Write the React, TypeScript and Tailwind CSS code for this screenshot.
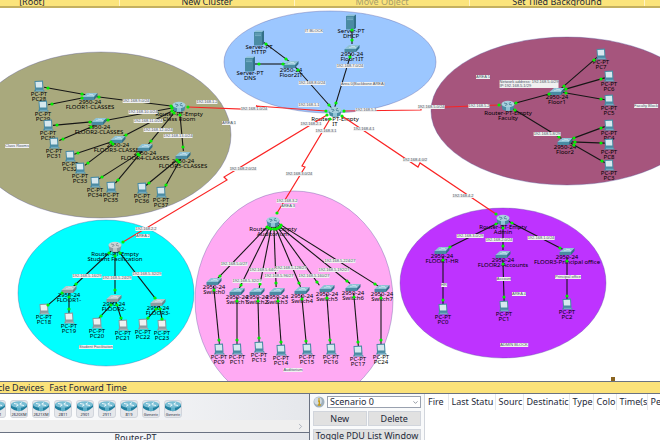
import React from "react";
import { ChevronDown, ChevronRight } from "lucide-react";

type Kind = "pc" | "switch" | "router" | "server";

interface Device {
  kind: Kind;
  x: number;
  y: number;
  label: string[];
  pale?: boolean;
}

interface Tag {
  x: number;
  y: number;
  text: string[];
}

// Scroll position of the workspace inside the logical view
const SCROLL_Y = 8;

const zones = [
  { cx: 101, cy: 135, rx: 130, ry: 83, fill: "#a9a97d" },
  { cx: 330, cy: 62, rx: 106, ry: 51, fill: "#9cc7ff" },
  { cx: 567, cy: 111, rx: 136, ry: 74, fill: "#a6557d" },
  { cx: 106, cy: 293, rx: 88, ry: 73, fill: "#00ffff" },
  { cx: 294, cy: 300, rx: 99, ry: 109, fill: "#ffaaf3" },
  { cx: 503, cy: 283, rx: 103, ry: 75, fill: "#be33ff" },
];

const pc = (x: number, y: number, name: string, pale = false): Device => ({
  kind: "pc",
  x,
  y,
  label: ["PC-PT", name],
  pale,
});

const sw = (x: number, y: number, name: string, pale = false): Device => ({
  kind: "switch",
  x,
  y,
  label: ["2950-24", name],
  pale,
});

const router = (x: number, y: number, name: string, pale = false): Device => ({
  kind: "router",
  x,
  y,
  label: ["Router-PT-Empty", name],
  pale,
});

const server = (x: number, y: number, name: string): Device => ({
  kind: "server",
  x,
  y,
  label: ["Server-PT", name],
});

const devices: Device[] = [
  // Class rooms
  pc(39, 86, "PC28"),
  pc(43, 106, "PC29"),
  pc(48, 125, "PC30"),
  pc(54, 143, "PC31"),
  pc(70, 156, "PC32"),
  pc(80, 168, "PC33"),
  pc(95, 182, "PC34"),
  pc(111, 187, "PC35"),
  pc(142, 188, "PC36"),
  pc(161, 192, "PC37"),
  sw(90, 97, "FLOOR1-CLASSES"),
  sw(99, 122, "FLOOR2-CLASSES"),
  sw(118, 140, "FLOOR3-CLASSES"),
  sw(145, 148, "FLOOR4-CLASSES"),
  sw(183, 156, "FLOOR5-CLASSES"),
  router(179, 107, "Class Room"),
  // IT
  server(259, 38, "HTTP"),
  server(250, 64, "DNS"),
  server(351, 22, "DHCP"),
  sw(291, 65, "Floor2IT"),
  sw(352, 49, "Floor1IT"),
  router(335, 112, "IT"),
  // Faculty
  router(508, 106, "Faculty"),
  sw(557, 92, "Floor1"),
  sw(565, 142, "Floor2"),
  pc(601, 54, "PC7"),
  pc(609, 76, "PC6"),
  pc(609, 100, "PC5"),
  pc(609, 125, "PC4"),
  pc(609, 144, "PC8"),
  pc(609, 165, "PC3"),
  // Students
  router(115, 247, "Student Facilication", true),
  sw(69, 290, "FLOOR1-", true),
  sw(114, 299, "FLOOR2-", true),
  sw(158, 303, "FLOOR3-", true),
  pc(44, 309, "PC18", true),
  pc(69, 318, "PC19", true),
  pc(97, 323, "PC20", true),
  pc(123, 325, "PC21", true),
  pc(143, 324, "PC22", true),
  pc(162, 325, "PC23", true),
  // Auditorium
  router(273, 222, "Auditorium"),
  sw(214, 282, "Switch0"),
  sw(237, 292, "Switch1"),
  sw(257, 292, "Switch2"),
  sw(277, 292, "Switch3"),
  sw(302, 291, "Switch4"),
  sw(327, 289, "Switch5"),
  sw(353, 288, "Switch6"),
  sw(382, 289, "Switch7"),
  pc(219, 349, "PC9"),
  pc(237, 349, "PC11"),
  pc(259, 347, "PC13"),
  pc(281, 350, "PC14"),
  pc(307, 349, "PC15"),
  pc(331, 349, "PC16"),
  pc(358, 351, "PC17"),
  pc(381, 349, "PC24"),
  // Admin
  router(503, 220, "Admin"),
  sw(442, 251, "FLOOR1-HR"),
  sw(503, 255, "FLOOR2-Accounts"),
  sw(567, 252, "FLOOR3-Principal office"),
  pc(443, 309, "PC0"),
  pc(504, 306, "PC1"),
  pc(567, 304, "PC2"),
];

// Copper links, given by their two status lights
const links: number[][] = [
  [48, 88, 82, 94],
  [52, 104, 82, 98],
  [99, 97, 171, 106],
  [57, 125, 90, 122],
  [63, 139, 91, 127],
  [108, 120, 172, 108],
  [78, 153, 111, 142],
  [88, 163, 113, 144],
  [126, 135, 172, 111],
  [102, 177, 138, 154],
  [118, 180, 139, 155],
  [151, 141, 174, 113],
  [183, 147, 180, 115],
  [149, 183, 177, 160],
  [166, 185, 179, 162],
  [266, 44, 286, 59],
  [259, 64, 283, 64],
  [298, 70, 329, 105],
  [352, 30, 352, 40],
  [350, 57, 336, 103],
  [516, 103, 549, 94],
  [564, 86, 594, 60],
  [566, 89, 601, 79],
  [566, 93, 601, 99],
  [515, 110, 559, 137],
  [574, 138, 601, 128],
  [575, 142, 601, 143],
  [574, 145, 602, 161],
  [109, 253, 76, 284],
  [115, 256, 115, 290],
  [120, 253, 155, 298],
  [62, 293, 48, 305],
  [69, 297, 69, 309],
  [111, 305, 101, 316],
  [117, 305, 121, 318],
  [156, 309, 148, 318],
  [160, 309, 162, 319],
  [267, 227, 220, 276],
  [269, 228, 241, 285],
  [271, 229, 260, 284],
  [274, 229, 276, 283],
  [276, 229, 299, 283],
  [278, 228, 317, 282],
  [280, 227, 347, 281],
  [281, 225, 375, 284],
  [214, 290, 219, 340],
  [237, 301, 237, 340],
  [258, 301, 259, 338],
  [278, 301, 281, 342],
  [302, 299, 306, 341],
  [327, 298, 330, 340],
  [354, 297, 358, 342],
  [381, 298, 381, 340],
  [496, 224, 450, 247],
  [503, 228, 503, 246],
  [512, 223, 560, 248],
  [443, 260, 443, 300],
  [503, 264, 504, 297],
  [567, 261, 567, 296],
];

const serialLinks: number[][][] = [
  [[188, 107], [266, 110], [256, 106], [326, 111]],
  [[344, 111], [421, 110], [421, 108], [499, 105]],
  [[327, 115], [224, 177], [227, 180], [123, 242]],
  [[330, 119], [302, 166], [305, 167], [277, 213]],
  [[342, 116], [418, 167], [420, 163], [496, 214]],
];

const tag = (x: number, y: number, ...text: string[]): Tag => ({ x, y, text });

const tags: Tag[] = [
  tag(136, 101, "192.168.9.0/24"),
  tag(143, 112, "192.168.10.0/24"),
  tag(148, 121, "192.168.11.0/24"),
  tag(158, 130, "192.168.12.0/24"),
  tag(178, 136, "192.168.13.0/24"),
  tag(207, 102, "192.168.1.2"),
  tag(17, 146, "Class Rooms"),
  tag(229, 123, "AREA 1"),
  tag(314, 31, "IT BLOCK"),
  tag(350, 66, "192.168.7.0/24"),
  tag(312, 83, "192.168.8.0/24"),
  tag(363, 84, "Area 0(Backbone AREA)"),
  tag(309, 105, "192.168.1.1"),
  tag(254, 109, "192.168.1.0/24"),
  tag(366, 110, "192.168.5.1"),
  tag(431, 107, "192.168.5.0/24"),
  tag(311, 124, "192.168.2.1"),
  tag(326, 131, "192.168.3.1"),
  tag(364, 129, "192.168.4.1"),
  tag(243, 169, "192.168.2.0/24"),
  tag(299, 174, "192.168.3.0/24"),
  tag(415, 160, "192.168.4.0/2"),
  tag(463, 196, "192.168.4.2"),
  tag(287, 201, "192.168.3.2"),
  tag(288, 206, "AREA 3"),
  tag(234, 264, "192.168.5.0/27"),
  tag(247, 281, "192.168.5.32/27"),
  tag(264, 270, "192.168.5.64/27"),
  tag(279, 276, "192.168.5.96/27"),
  tag(291, 268, "192.168.5.128/27"),
  tag(314, 276, "192.168.5.160/27"),
  tag(334, 270, "192.168.5.192/27"),
  tag(340, 261, "192.168.5.224/27"),
  tag(293, 370, "Auditorium"),
  tag(146, 229, "192.168.2.2"),
  tag(143, 236, "AREA 2"),
  tag(87, 276, "192.168.5.16/29"),
  tag(117, 278, "192.168.5.24/29"),
  tag(147, 274, "192.168.5.32/29"),
  tag(96, 347, "Student Facilitation"),
  tag(483, 77, "AREA 5"),
  tag(529, 84, "Network address: 192.168.5.0/29", "IP:192.168.5.1/29"),
  tag(479, 106, "192.168.5.2"),
  tag(646, 106, "Faculty Block"),
  tag(547, 134, "192.168.5.8/29"),
  tag(470, 236, "192.168.3.0/29"),
  tag(499, 240, "192.168.2.0/24"),
  tag(541, 238, "192.168.1.0/24"),
  tag(444, 285, "HR"),
  tag(504, 279, "Account"),
  tag(568, 277, "Principal office"),
  tag(519, 294, "AREA 4"),
  tag(514, 345, "ADMIN BLOCK"),
];

// Distance from the middle of an icon to the top of its caption
const captionOffset: Record<Kind, number> = {
  pc: 6,
  switch: 3,
  router: 5,
  server: 7,
};

const DeviceIcon: React.FC<{ device: Device }> = ({ device }) => {
  const { kind, x, y, pale } = device;
  const top = pale ? "#b9c6ca" : "#8fc3d6";
  const front = pale ? "#8b9ba1" : "#4a8ba3";
  const side = pale ? "#6d7f86" : "#326f87";

  return (
    <g transform={`translate(${x} ${y})`}>
      {kind === "pc" && (
        <>
          <path d="M-4 3 L4 3 L6 5.5 L-5 5.5 Z" fill={front} />
          <path d="M-4.5 -5 L4 -5.5 L4.5 3 L-4 3 Z" fill={front} />
          <path d="M-3.5 -4 L3 -4.3 L3.3 1.6 L-3 1.6 Z" fill={pale ? "#eef1f1" : "#d6e8ef"} />
          <path d="M-3 4.3 L4.5 4.3" stroke={top} strokeWidth=".7" />
        </>
      )}
      {kind === "switch" && (
        <>
          <path d="M-7.5 0 L-3 -4 L7.5 -4 L4 0 Z" fill={top} />
          <path d="M-7.5 0 L4 0 L4 3 L-7.5 3 Z" fill={front} />
          <path d="M4 0 L7.5 -4 L7.5 -1 L4 3 Z" fill={side} />
          <path d="M-3 -1.3 L3 -2.6 M-1 -3 L4 -1.2" stroke="#d7eaf1" strokeWidth=".6" />
        </>
      )}
      {kind === "router" && (
        <>
          <path d="M-6.5 -2 L-5.5 3.5 Q0 6.5 5.5 3.5 L6.5 -2 Z" fill={front} />
          <path d="M-2 -1 L-2 4.8 L2 4.8 L2 -1 Z" fill={top} />
          <ellipse cx="0" cy="-2" rx="6.5" ry="3.2" fill={pale ? "#cbd3d5" : "#a8d0de"} />
          <path
            d="M-4 -3 L-1 -2.3 M4 -1 L1 -1.7 M-3 -.5 L-.5 -1.6 M3 -3.7 L.8 -2.6"
            stroke={side}
            strokeWidth=".7"
          />
        </>
      )}
      {kind === "server" && (
        <>
          <path d="M-5 -6 L-3 -7.5 L5 -7.5 L3 -6 Z" fill={top} />
          <path d="M-5 -6 L3 -6 L3 7.5 L-5 7.5 Z" fill={front} />
          <path d="M3 -6 L5 -7.5 L5 6 L3 7.5 Z" fill={side} />
          <path d="M-4 -4 L2 -4 M-4 -2.4 L2 -2.4" stroke={top} strokeWidth=".6" />
        </>
      )}
    </g>
  );
};

const CopperLine: React.FC<{ ends: number[] }> = ({ ends }) => {
  const [x1, y1, x2, y2] = ends;
  const length = Math.hypot(x2 - x1, y2 - y1);
  const dx = ((x2 - x1) / length) * 4;
  const dy = ((y2 - y1) / length) * 4;
  return <line x1={x1 - dx} y1={y1 - dy} x2={x2 + dx} y2={y2 + dy} />;
};

const Workspace: React.FC = () => {
  const lights = [
    ...links.flatMap(([x1, y1, x2, y2]) => [
      [x1, y1],
      [x2, y2],
    ]),
    ...serialLinks.flatMap((points) => [points[0], points[points.length - 1]]),
  ];

  return (
    <main className="relative flex-1 min-h-0 overflow-hidden bg-white">
      <svg className="absolute inset-0 w-full h-full" aria-hidden="true">
        <g transform={`translate(0 ${-SCROLL_Y})`} stroke="#55559a" strokeOpacity=".6" strokeWidth=".6">
          {zones.map((zone) => (
            <ellipse key={zone.fill} {...zone} />
          ))}
        </g>
      </svg>

      {devices.map((device) => (
        <div
          key={device.label[1]}
          className="absolute -translate-x-1/2 text-center whitespace-nowrap text-[6px] leading-[5px] text-black"
          style={{
            left: device.x,
            top: device.y + captionOffset[device.kind] - SCROLL_Y,
          }}
        >
          {device.label.map((line) => (
            <div key={line}>{line}</div>
          ))}
        </div>
      ))}

      <svg className="absolute inset-0 w-full h-full" aria-hidden="true">
        <g transform={`translate(0 ${-SCROLL_Y})`}>
          <g stroke="#161616" strokeWidth="1.1">
            {links.map((ends) => (
              <CopperLine key={ends.join()} ends={ends} />
            ))}
          </g>
          <g stroke="#fa2424" strokeWidth="1.2" fill="none">
            {serialLinks.map((points) => (
              <polyline key={points.join()} points={points.join(" ")} />
            ))}
          </g>
          {devices.map((device) => (
            <DeviceIcon key={device.label[1]} device={device} />
          ))}
          <g fill="#00f000">
            {lights.map(([x, y], i) => (
              <circle key={i} cx={x} cy={y} r="1.6" />
            ))}
          </g>
          <rect x="611" y="377" width="4" height="4" fill="#8a6420" />
        </g>
      </svg>

      {tags.map((item) => (
        <div
          key={`${item.x}-${item.y}`}
          className="absolute -translate-x-1/2 -translate-y-1/2 whitespace-nowrap bg-[#f0f0f0] font-['Liberation_Sans',sans-serif] text-[4px] leading-[4px] text-gray-600"
          style={{ left: item.x, top: item.y - SCROLL_Y }}
        >
          {item.text.map((line) => (
            <div key={line}>{line}</div>
          ))}
        </div>
      ))}
    </main>
  );
};

const models = ["1941", "2620XM", "2621XM", "2811", "2901", "2911", "819", "Generic", "Generic"];

const ModelIcon: React.FC = () => (
  <svg viewBox="0 0 16 11" className="w-4 h-[11px]" aria-hidden="true">
    <path d="M0 3 L0 7 Q8 14 16 6 L16 3 Z" fill="#217f9f" />
    <path d="M6 4 L6 10 L10 10 L10 4 Z" fill="#5db0ca" />
    <ellipse cx="8" cy="3.5" rx="8" ry="3.3" fill="#79bed4" />
    <path d="M3 2.5 L7 3.3 M13 4.5 L9 3.7 M5 5.3 L7.5 4 M11 1.7 L8.5 3" stroke="#e9f6fa" />
  </svg>
);

const DevicePanel: React.FC = () => (
  <section className="w-[310px] shrink-0 flex flex-col border-r border-gray-500 bg-gradient-to-r from-white to-gray-200">
    <div className="h-[26px] shrink-0 -ml-3 flex items-center gap-1 pt-1">
      {models.map((model, i) => (
        <button
          key={i}
          type="button"
          className="w-[18px] h-[18px] shrink-0 flex flex-col items-center rounded-[3px] border border-gray-300 bg-gray-200 overflow-hidden"
        >
          <ModelIcon />
          <span className="text-[4px] leading-[5px] text-gray-800">{model}</span>
        </button>
      ))}
    </div>
    <div className="h-3 shrink-0 flex items-center justify-end pr-1 bg-[#efefef]">
      <ChevronRight size={9} className="text-gray-400" />
    </div>
    <div className="border-t border-gray-500 pr-[38px] text-center leading-[10px]">Router-PT</div>
  </section>
);

const ScenarioPanel: React.FC = () => (
  <section className="w-[115px] shrink-0 flex flex-col gap-[3px] pt-[2px] px-[3px] border-r border-gray-300 bg-gray-50">
    <div className="flex items-center gap-[2px]">
      <svg viewBox="0 0 12 12" className="w-3 h-3 shrink-0" aria-hidden="true">
        <circle cx="6" cy="6" r="5.5" fill="#9fb0bd" />
        <circle cx="5" cy="5" r="3.8" fill="#d3dce2" />
        <path d="M6 2.2 L6 3.8 M5 5 L6.3 5 L6.3 9 M4.8 9 L7.8 9" stroke="#c79a12" strokeWidth="1.4" fill="none" />
      </svg>
      <div className="relative flex-1">
        <select
          aria-label="Scenario"
          className="block w-full h-3 appearance-none border border-gray-400 bg-white pl-[2px] text-[9px] leading-[10px]"
        >
          <option>Scenario 0</option>
        </select>
        <ChevronDown size={7} className="absolute right-[2px] top-[3px] text-gray-600 pointer-events-none" />
      </div>
    </div>
    <div className="grid grid-cols-2 gap-px">
      <button type="button" className="h-[15px] border border-gray-300 bg-[#e1e1e1] leading-[12px]">
        New
      </button>
      <button type="button" className="h-[15px] border border-gray-300 bg-[#e1e1e1] leading-[12px]">
        Delete
      </button>
    </div>
    <button
      type="button"
      className="h-[15px] border border-gray-300 bg-[#e1e1e1] leading-[12px] whitespace-nowrap"
    >
      Toggle PDU List Window
    </button>
  </section>
);

const EventTable: React.FC = () => (
  <section className="flex-1 min-w-0 overflow-hidden bg-white">
    <table className="w-[260px] table-fixed text-left">
      <thead>
        <tr className="h-4">
          <th className="w-[23px] pl-[3px] font-normal overflow-hidden border-r border-gray-200">Fire</th>
          <th className="w-[47px] pl-[3px] font-normal overflow-hidden whitespace-nowrap border-r border-gray-200">Last Statu</th>
          <th className="w-[28px] pl-[3px] font-normal overflow-hidden border-r border-gray-200">Sourc</th>
          <th className="w-[46px] pl-[3px] font-normal overflow-hidden border-r border-gray-200">Destinatic</th>
          <th className="w-[24px] pl-[3px] font-normal overflow-hidden border-r border-gray-200">Type</th>
          <th className="w-[23px] pl-[3px] font-normal overflow-hidden border-r border-gray-200">Colo</th>
          <th className="w-[31px] pl-[3px] font-normal overflow-hidden border-r border-gray-200">Time(s</th>
          <th className="pl-[3px] font-normal overflow-hidden">Periodic</th>
        </tr>
      </thead>
    </table>
  </section>
);

const App: React.FC = () => {
  return (
    <div className="h-screen flex flex-col overflow-hidden bg-white font-['Noto_Sans',sans-serif] text-[9px] text-gray-800">
      <header className="h-2 shrink-0 flex items-end overflow-hidden border-b-2 border-[#c4b060] bg-[#fbe47c] leading-[8px]">
        <div className="w-[175px] -ml-[55px] shrink-0 border-r border-amber-100 text-center">[Root]</div>
        <div className="w-[175px] shrink-0 border-r border-amber-100 text-center">New Cluster</div>
        <div className="w-[175px] shrink-0 border-r border-amber-100 text-center text-[#a89f6c]">Move Object</div>
        <div className="w-[175px] shrink-0 border-r border-amber-100 text-center">Set Tiled Background</div>
      </header>

      <Workspace />

      <footer className="h-[59px] shrink-0 flex flex-col">
        <div className="h-[13px] shrink-0 -ml-[2px] flex items-center gap-[5px] border-y border-gray-500 bg-[#fbe27a] leading-[11px]">
          <span>cle Devices</span>
          <span>Fast Forward Time</span>
        </div>
        <div className="flex-1 min-h-0 flex overflow-hidden">
          <DevicePanel />
          <ScenarioPanel />
          <EventTable />
        </div>
      </footer>
    </div>
  );
};

export default App;
